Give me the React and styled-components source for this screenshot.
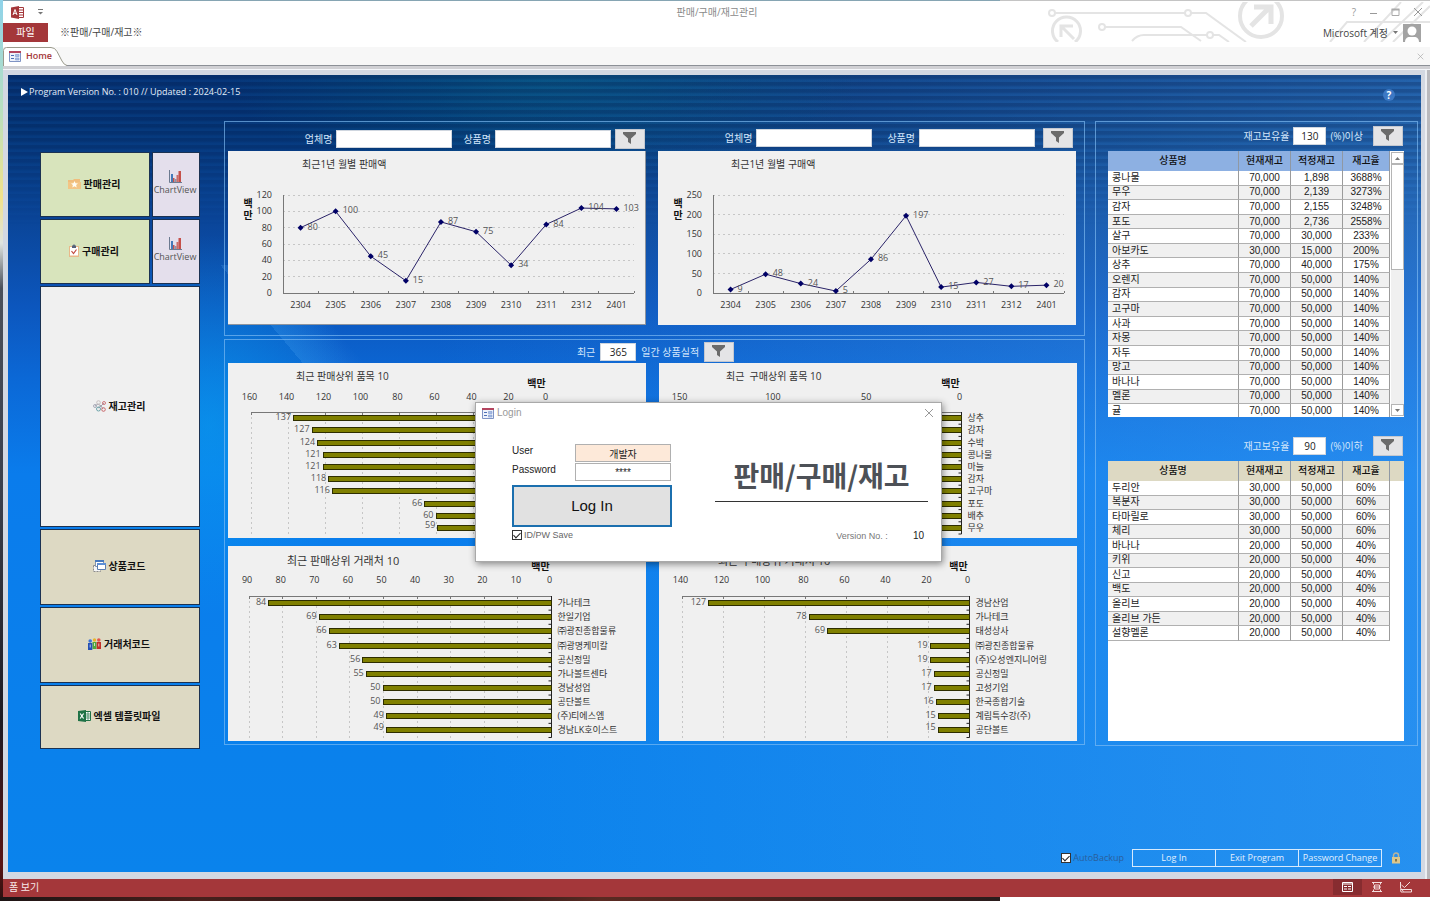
import { useState } from "react";
import styled, { createGlobalStyle } from "styled-components";

const GlobalStyle = createGlobalStyle`
    * {
        box-sizing: border-box;
    }

    body {
        margin: 0;
        font-family: "Open Sans", "Noto Sans CJK KR", sans-serif;
        font-size: 10px;
        line-height: 14px;
        color: #222;
    }

    button,
    input {
        font: inherit;
        color: inherit;
        margin: 0;
    }
`;

const Desktop = styled.div`
    min-height: 100vh;
    min-width: 1180px;
    display: flex;
    flex-direction: column;
    padding: 1px 0 4px 3px;
    background:
        linear-gradient(90deg, #1d1414, #48201c 20%, #1c1718 45%, #5a2a22 60%, #2a1c1c) left bottom / 1000px 4px no-repeat,
        linear-gradient(#8fd3ea 0, #b7dfc0 12%, #f2e28a 22%, #dfe3e0 27%, #4a4f5a 32%, #3a3f4c 55%, #1d1a22 80%, #5a1414 96%, #2a1010) left top / 3px 100% no-repeat,
        linear-gradient(90deg, #86a5b3 1000px, #c4c4c4 1000px) left top / 100% 1px no-repeat,
        #fff;
`;

const Window = styled.div`
    position: relative;
    flex: 1;
    display: flex;
    flex-direction: column;
    background: #fff;
`;

/* ---------- title bar and ribbon ---------- */

const Top = styled.header`
    position: relative;
    height: 46px;
`;

const Circuit = styled.svg`
    position: absolute;
    right: 0;
    top: 1px;
    width: 384px;
    height: 40px;
`;

const TitleBar = styled.div`
    position: relative;
    display: grid;
    grid-template-columns: 1fr auto 1fr;
    align-items: center;
    height: 22px;
    padding: 0 7px 0 8px;
    color: #8a8a8a;
`;

const TitleSide = styled.div`
    display: flex;
    align-items: center;
    gap: ${(p) => p.$gap}px;
    justify-content: ${(p) => (p.$end ? "flex-end" : "flex-start")};
`;

const IconButton = styled.button`
    display: flex;
    border: 0;
    padding: 0;
    background: none;
    color: #999;
    cursor: pointer;
`;

const Ribbon = styled.div`
    position: relative;
    display: flex;
    align-items: center;
    height: 19px;
    color: #444;
`;

const FileButton = styled.button`
    width: 45px;
    height: 19px;
    padding: 0 0 1px;
    border: 0;
    background: #a4373a;
    color: #fff;
`;

const RibbonTab = styled.button`
    border: 0;
    padding: 0 0 2px;
    margin-left: 12px;
    background: none;
`;

const Account = styled.div`
    display: flex;
    align-items: center;
    gap: 5px;
    margin-left: auto;
    padding-right: 9px;
`;

const DocTabs = styled.div`
    display: flex;
    align-items: center;
    justify-content: space-between;
    height: 19px;
    padding-right: 6px;
    background: #f7f7f7;
    border-bottom: 1px solid #8c9097;
`;

const DocTab = styled.button`
    position: relative;
    height: 19px;
    width: 62px;
    padding: 0 0 0 6px;
    border: 0;
    background: none;
    color: #a4373a;
    font-size: 9px;
    font-weight: 600;
    display: flex;
    align-items: center;
    gap: 5px;

    > svg:first-child {
        position: absolute;
        left: 0;
        top: 0;
    }

    > svg,
    > span {
        position: relative;
    }
`;

/* ---------- main form ---------- */

const Frame = styled.div`
    flex: 1;
    display: flex;
    padding: 9px 9px 7px 5px;
    background: #d3d8e2;
    box-shadow: inset 0 3px 0 #d0d0d4, inset 0 4px 0 #f4f6fa, inset -3px 0 0 #b9b9bd, inset -5px 0 0 #eceef2;
`;

const Form = styled.main`
    position: relative;
    flex: 1;
    min-width: 0;
    display: flex;
    flex-direction: column;
    background:
        radial-gradient(ellipse 150px 190px at 200px 350px, rgba(8, 160, 240, 0.6), rgba(8, 160, 240, 0)),
        linear-gradient(50deg, transparent 60%, rgba(120, 190, 255, 0.18) 60%, transparent 76%) 88px 190px / 280px 130px no-repeat,
        radial-gradient(ellipse 320px 110px at 38% 0, rgba(8, 110, 140, 0.5), rgba(8, 110, 140, 0)),
        linear-gradient(90deg, rgba(60, 150, 240, 0) 30%, rgba(80, 165, 245, 0.4)),
        linear-gradient(#07367a 0, #06397c 7%, #0a4598 18%, #0c56bd 29%, #0b68d6 38%, #0a7cec 50%, #0a83ec 100%);

    &::before {
        content: "";
        position: absolute;
        inset: 0 0 auto 0;
        height: 150px;
        background: repeating-linear-gradient(rgba(0, 10, 50, 0.2) 0 3px, rgba(0, 10, 50, 0) 5px 7px);
        mask-image: linear-gradient(#000 30%, transparent);
        pointer-events: none;
    }
`;

const FormHeader = styled.div`
    position: relative;
    display: flex;
    justify-content: space-between;
    align-items: flex-start;
    height: 46px;
    padding: 10px 26px 0 13px;
    color: #e4edf8;
    font-size: 9px;
`;

const Version = styled.div`
    display: flex;
    align-items: center;
    gap: 1px;
`;

const HelpButton = styled.button`
    width: 12px;
    height: 12px;
    margin-top: 4px;
    padding: 0;
    border: 0;
    border-radius: 50%;
    background: #3c78c4;
    color: #fff;
    font-size: 10px;
    font-weight: 700;
    line-height: 12px;
`;

const Columns = styled.div`
    position: relative;
    display: grid;
    grid-template-columns: 160px minmax(0, 1fr) 323px;
    align-items: start;
    padding: 0 3px 0 32px;
`;

const Nav = styled.nav`
    display: flex;
    flex-direction: column;
    gap: 2px;
    padding-top: 31px;
`;

const NavRow = styled.div`
    display: grid;
    grid-template-columns: 1fr 48px;
    gap: 2px;
`;

const tones = {
    green: "#d8e4bc",
    lilac: "#e4dfec",
    plain: "#f0f0f0",
    sand: "#ddd9c3",
};

const NavButton = styled.button`
    display: flex;
    flex-direction: ${(p) => (p.$stacked ? "column" : "row")};
    align-items: center;
    justify-content: center;
    gap: ${(p) => (p.$stacked ? 0 : 3)}px;
    height: ${(p) => p.$height}px;
    padding: 0 2px 2px 0;
    border: 1px solid #1b3252;
    background: ${(p) => tones[p.$tone]};
    color: ${(p) => (p.$stacked ? "#555" : "#111")};
    font-size: ${(p) => (p.$stacked ? 9 : 10)}px;
    font-weight: ${(p) => (p.$stacked ? 400 : 700)};
    cursor: pointer;
`;

const Middle = styled.div`
    display: flex;
    flex-direction: column;
    gap: 3px;
    margin: 0 10px 0 24px;
`;

const Group = styled.section`
    border: 1px solid rgba(130, 190, 245, 0.65);
    padding: ${(p) => p.$padding};
`;

const ChartGrid = styled.div`
    display: grid;
    grid-template-columns: 1fr 1fr;
    gap: 8px ${(p) => p.$gap}px;
`;

const FilterRow = styled.form`
    display: flex;
    align-items: center;
    justify-content: ${(p) => p.$justify || "flex-end"};
    gap: ${(p) => p.$gap}px;
    height: ${(p) => p.$height}px;
    padding: ${(p) => p.$padding || 0};
    color: #d3e6fb;
`;

const Field = styled.div`
    display: flex;
    align-items: center;
    gap: 4px;
    padding-left: 7px;
`;

const TextInput = styled.input`
    width: ${(p) => p.$width}px;
    height: 18px;
    padding: 0 2px;
    border: 1px solid #cfd6df;
    background: #fff;
    color: #222;
    text-align: ${(p) => (p.$center ? "center" : "left")};
`;

const FunnelButton = styled.button`
    display: flex;
    align-items: center;
    justify-content: center;
    width: 30px;
    height: 20px;
    padding: 0 2px 2px 0;
    border: 1px solid #c4c8d0;
    background: #e4e4e6;
`;

const ChartPanel = styled.figure`
    margin: 0;
    background: #f0f0f0;
    overflow: hidden;
    box-shadow: ${(p) => (p.$edge ? "inset 0 -1px 0 #8d949e, inset -1px 0 0 #8d949e" : "none")};

    svg {
        display: block;
        width: 100%;
        height: auto;
    }

    text {
        font-size: 9px;
        fill: #333;
        white-space: pre;
    }

    .title {
        font-size: ${(p) => p.$title || 10}px;
    }

    .unit {
        font-size: 10px;
        font-weight: 700;
        fill: #111;
    }

    .value {
        fill: #555;
    }

    .grid {
        stroke: #c6c6c6;
        stroke-dasharray: 2 3;
        shape-rendering: crispEdges;
    }

    .axis {
        stroke: #777;
        fill: none;
        shape-rendering: crispEdges;
    }
`;

/* ---------- stock tables ---------- */

const StockSection = styled.div`
    & + & {
        margin-top: 15px;
    }
`;

const TableFrame = styled.div`
    display: flex;
    height: ${(p) => p.$height}px;
    margin: 0 13px 0 12px;
    overflow: hidden;
    background: #fff;
`;

const StockTable = styled.table`
    flex: 1;
    height: ${(p) => p.$height}px;
    border-spacing: 0;
    table-layout: fixed;
    line-height: 12px;

    th {
        height: ${(p) => p.$head}px;
        padding: 0 0 2px;
        background: ${(p) => p.$tint};
        border-right: 1px solid #8f98a4;
        font-weight: 500;
        color: #111;
    }

    td {
        padding: 0;
        border-right: 1px solid #9b9b9b;
        border-bottom: 1px solid #b0b0b0;
        font-family: "Liberation Sans", "Noto Sans CJK KR", sans-serif;
        text-align: center;
        overflow: hidden;
    }

    td:first-child {
        padding-left: 4px;
        text-align: left;
    }

    tr:nth-child(even) td {
        background: #f0f0f0;
    }
`;

const TableSide = styled.div`
    width: 14px;
    height: ${(p) => p.$head}px;
    background: ${(p) => p.$tint};
`;

const ScrollBar = styled.div`
    display: flex;
    flex-direction: column;
    width: 13px;
    margin: 1px 0 1px 1px;
    background: #f0f0f0;
`;

const ScrollArrow = styled.button`
    display: flex;
    align-items: center;
    justify-content: center;
    height: 12px;
    padding: 0;
    border: 1px solid #b5b5b5;
    background: #fff;
`;

const ScrollThumb = styled.div`
    height: 106px;
    border: 1px solid #b5b5b5;
    background: #fff;
    margin-bottom: auto;
`;

/* ---------- form footer and status bar ---------- */

const FormFooter = styled.div`
    display: flex;
    align-items: center;
    justify-content: flex-end;
    margin-top: auto;
    padding: 8px 20px 5px;
    color: #e2effd;
    font-size: 9px;
`;

const CheckLabel = styled.label`
    display: flex;
    align-items: center;
    gap: 2px;
    color: ${(p) => p.$color};
    font-size: 9px;
`;

const CheckBox = styled.input`
    appearance: none;
    position: relative;
    width: 10px;
    height: 10px;
    border: 1px solid #333;
    background: #fff;

    &:checked::after {
        content: "";
        position: absolute;
        left: 2px;
        top: 0;
        width: 3px;
        height: 6px;
        border: solid #222;
        border-width: 0 1px 1px 0;
        transform: rotate(45deg);
    }
`;

const FootButtons = styled.div`
    display: flex;
    margin: 0 9px 0 8px;
`;

const FootButton = styled.button`
    width: 84px;
    height: 18px;
    padding: 0;
    border: 1px solid #d6eafd;
    background: transparent;
    white-space: nowrap;

    & + & {
        margin-left: -1px;
    }
`;

const StatusBar = styled.footer`
    display: flex;
    align-items: center;
    justify-content: space-between;
    height: 18px;
    padding: 0 10px 2px 6px;
    background: #a4373a;
    color: #f7e9e9;
`;

const Views = styled.div`
    display: flex;
`;

const ViewButton = styled.button`
    display: flex;
    align-items: center;
    justify-content: center;
    width: 29px;
    height: 16px;
    padding: 0;
    border: 0;
    background: ${(p) => (p.$active ? "#872c30" : "transparent")};
`;

/* ---------- login window ---------- */

const Dialog = styled.div`
    position: absolute;
    left: 472px;
    top: 401px;
    width: 467px;
    height: 160px;
    border: 1px solid #a9a9a9;
    background: #fff;
    box-shadow: 1px 2px 7px rgba(0, 0, 0, 0.45);
    font-family: "Liberation Sans", "Noto Sans CJK KR", sans-serif;
`;

const DialogBar = styled.div`
    display: flex;
    align-items: center;
    gap: 3px;
    height: 20px;
    padding: 0 7px 0 6px;
    color: #999;

    button {
        margin-left: auto;
    }
`;

const DialogBody = styled.form`
    display: grid;
    grid-template-columns: 160px 213px;
    gap: 43px;
    padding: 21px 0 0 36px;
`;

const LoginFields = styled.div`
    display: grid;
    grid-template-columns: 62px 96px;
    row-gap: 1px;
    column-gap: 1px;

    label {
        color: #222;
    }
`;

const LoginInput = styled.input`
    height: 18px;
    width: 96px;
    padding: 0;
    border: 1px solid #b0b0b0;
    background: ${(p) => p.$fill};
    text-align: center;
`;

const LoginButton = styled.button`
    width: 160px;
    height: 42px;
    margin: 4px 0 1px;
    border: 2px solid #1b6fae;
    background: #e1e1e1;
    color: #111;
    font-size: 15px;
`;

const Brand = styled.div`
    text-align: center;

    h1 {
        margin: 0;
        padding: 8px 0 0;
        height: 58px;
        border-bottom: 1px solid #333;
        color: #4d5157;
        font-family: "Noto Sans CJK KR", sans-serif;
        font-size: 28px;
        font-weight: 700;
        line-height: 46px;
        white-space: nowrap;
    }

    p {
        display: flex;
        justify-content: flex-end;
        gap: 25px;
        margin: 27px 4px 0 0;
        font-size: 9px;
        color: #777;
    }

    b {
        font-weight: 400;
        font-size: 10px;
        color: #222;
    }
`;

/* ---------- icons ---------- */

const AccessIcon = () => (
    <svg width="13" height="13" viewBox="0 0 13 13">
        <path d="M7 1.500h5.500v10H7z" fill="#fff" stroke="#a4373a" />
        <path d="M8 4h4M8 6.500h4M8 9h4" stroke="#a4373a" />
        <path d="M0 1.500 8 0v13L0 11.500z" fill="#a4373a" />
        <path d="M2 9 4 3.500 6 9M2.800 7.300h2.400" stroke="#fff" fill="none" />
    </svg>
);

const FormIcon = () => (
    <svg width="12" height="11" viewBox="0 0 12 11">
        <path d="M.5.5h11v10H.5z" fill="#eef2fb" stroke="#7f93c4" />
        <path d="M0 0h12v2H0z" fill="#b3455f" />
        <path d="M2 4.500h3M2 7.500h3" stroke="#4d6fb5" />
        <path d="M6.500 3.500h3.500v2h-3.500zM6.500 7h3.500v2h-3.500z" fill="#a9bde4" stroke="#7f9ad0" strokeWidth=".6" />
    </svg>
);

const Cross = ({ size = 10, color = "#999" }) => (
    <svg width={size} height={size} viewBox="0 0 10 10">
        <path d="M1 1l8 8M9 1l-8 8" stroke={color} fill="none" />
    </svg>
);

const Funnel = () => (
    <svg width="13" height="12" viewBox="0 0 13 12">
        <path d="M0 0h13v2L8 6.500V12L5 10V6.500L0 2z" fill="#6b6b6b" />
    </svg>
);

const FolderStar = () => (
    <svg width="13" height="12" viewBox="0 0 13 12">
        <path d="M0 2h5l1-1h6v10H0z" fill="#f0bd7c" />
        <path d="M0 4h13v7H0z" fill="#f3c585" />
        <path d="M6.500 3l1 2.300 2.500.2-1.900 1.600.6 2.500-2.200-1.300-2.200 1.300.6-2.500L3 5.500l2.500-.2z" fill="#fffdf4" />
    </svg>
);

const Clipboard = () => (
    <svg width="10" height="13" viewBox="0 0 10 13">
        <path d="M0 2h10v11H0z" fill="#e9b98a" />
        <path d="M1 3h8v8.500H1z" fill="#fff" />
        <path d="M3 1.500h1l1-1.500 1 1.500h1V4H3z" fill="#56617a" />
        <path d="M2.500 7l2 2.500 3-4" stroke="#c1473c" fill="none" strokeWidth="1.200" />
    </svg>
);

const BarsIcon = () => (
    <svg width="13" height="13" viewBox="0 0 13 13">
        <path d="M.5 0v12.500H13" stroke="#6c7a90" fill="none" />
        <path d="M2 4h2v8H2z" fill="#4479b8" />
        <path d="M4 8h1.500v4H4zM9.500 1h2.500v11H9.500z" fill="#c5504a" />
        <path d="M5.500 9h2v3h-2z" fill="#8d93a8" />
        <path d="M7.500 5h2v7h-2z" fill="#c5504a" fillOpacity=".8" />
    </svg>
);

const Molecule = () => (
    <svg width="13" height="12" viewBox="0 0 13 12" fill="none">
        <path d="M2 6l3-2 3 2 3-3M5 8l3-2 2 3" stroke="#8a8a9a" strokeWidth=".8" />
        <circle cx="2" cy="6" r="1.500" stroke="#a9abb8" />
        <circle cx="5.500" cy="2.500" r="1.800" stroke="#c8c0c0" />
        <circle cx="11" cy="3" r="1.500" stroke="#d07a7e" />
        <circle cx="5.500" cy="9" r="2" stroke="#6fa5ab" />
        <circle cx="10.500" cy="9.500" r="1.800" stroke="#c9686c" />
    </svg>
);

const WindowsIcon = () => (
    <svg width="13" height="12" viewBox="0 0 13 12">
        <path d="M.5 5.500h7v6h-7z" fill="#f6f6f6" stroke="#8a8a8a" strokeDasharray="2 1" />
        <path d="M2.500.5h8v6h-8z" fill="#fff" stroke="#8394ad" />
        <path d="M2 0h9v2H2z" fill="#4678bd" />
        <path d="M4.500 3.500h8v6h-8z" fill="#fff" stroke="#5a7db0" />
        <path d="M4 3h9v2H4z" fill="#5c8fd6" />
    </svg>
);

const People = () => (
    <svg width="13" height="12" viewBox="0 0 13 12">
        <circle cx="6.500" cy="2" r="1.700" fill="#e8b52c" />
        <path d="M4.500 4h4v7h-4z" fill="#4fa83d" />
        <circle cx="2.200" cy="3" r="1.800" fill="#3c73d8" />
        <path d="M0 5h4.300v7H0z" fill="#2450b4" />
        <circle cx="10.800" cy="2" r="1.800" fill="#e2574c" />
        <path d="M8.700 4H13v7H8.700z" fill="#c22f28" />
        <path d="M2.200 6.500v3M6.500 5v3M10.800 5.500v3" stroke="#fff" strokeOpacity=".7" />
    </svg>
);

const ExcelIcon = () => (
    <svg width="13" height="12" viewBox="0 0 13 12">
        <path d="M7 1.500h5.500v9H7z" fill="#fff" stroke="#1f7246" />
        <path d="M8 4h4M8 6h4M8 8h4M10 2v8" stroke="#1f7246" strokeWidth=".7" />
        <path d="M0 1l8-1v12l-8-1z" fill="#1f7246" />
        <path d="M2.200 3.500l3.400 5M5.600 3.500l-3.400 5" stroke="#fff" strokeWidth="1.200" />
    </svg>
);

const LockIcon = () => (
    <svg width="10" height="12" viewBox="0 0 10 12">
        <path d="M2.500 6V3.500a2.500 2.500 0 0 1 5 0V6" fill="none" stroke="#b9b49c" strokeWidth="1.500" />
        <path d="M1 5h8v6.500H1z" fill="#dcc78c" />
        <path d="M5 7v2.500" stroke="#6b5a2a" strokeWidth="1.500" />
    </svg>
);

const Triangle = ({ up }) => (
    <svg width="5" height="3" viewBox="0 0 5 3">
        <path d={up ? "M0 3 2.500 0 5 3z" : "M0 0h5L2.500 3z"} fill="#777" />
    </svg>
);

const CircuitArt = () => (
    <Circuit viewBox="0 0 384 40" fill="none" stroke="#e4e4e4" strokeWidth="2" aria-hidden="true">
        <circle cx="6" cy="11" r="3" />
        <path d="M9 11h130M145 11h15l40 29" />
        <circle cx="142" cy="11" r="3" />
        <circle cx="56" cy="25" r="3" />
        <path d="M59 25h76l20 14M86 39q5-6 12-6h63M167 33h6l10 7" />
        <circle cx="164" cy="33" r="3" />
        <path d="M12 40a14 14 0 1 1 17 0" strokeWidth="3" />
        <path d="M28 37 16 25M15 35V24h12" strokeWidth="3" />
        <circle cx="215" cy="14" r="21" strokeWidth="4" />
        <path d="M205 24l17-17M208 5h17v17" strokeWidth="5" />
        <path d="M284 40l17-20h83M335 40l42-40M347 40l37-36M318 40l37-40" />
    </Circuit>
);

/* ---------- charts ---------- */

const PLOT = { left: 55, right: 406, top: 44, bottom: 142 };

function LineChart({ title, titleX, max, step, data, edge }) {
    const slot = (PLOT.right - PLOT.left) / data.length;
    const yOf = (v) => PLOT.bottom - (v / max) * (PLOT.bottom - PLOT.top);
    const points = data.map(([label, value], i) => ({
        label,
        value,
        x: PLOT.left + slot * (i + 0.5),
        y: yOf(value),
    }));
    const ticks = [];
    for (let v = 0; v <= max; v += step) ticks.push(v);

    return (
        <ChartPanel $edge={edge}>
            <svg viewBox="0 0 418 174" role="img" aria-label={title}>
                <text className="title" x={titleX} y="13" dy=".35em">{title}</text>
                <text className="unit" x="20" y="52" dy=".35em" textAnchor="middle">백</text>
                <text className="unit" x="20" y="64" dy=".35em" textAnchor="middle">만</text>
                {ticks.map((v) => (
                    <g key={v}>
                        {v > 0 && <line className="grid" x1={PLOT.left} x2={PLOT.right} y1={yOf(v)} y2={yOf(v)} />}
                        <text x="44" y={yOf(v)} dy=".35em" textAnchor="end">{v}</text>
                    </g>
                ))}
                <path className="axis" d={`M${PLOT.left} ${PLOT.top}V${PLOT.bottom}H${PLOT.right}`} />
                {points.map((p) => (
                    <line key={p.label} className="axis" x1={p.x + slot / 2} x2={p.x + slot / 2} y1={PLOT.bottom - 2} y2={PLOT.bottom} />
                ))}
                <polyline points={points.map((p) => `${p.x},${p.y}`).join(" ")} fill="none" stroke="#2a2368" />
                {points.map((p) => (
                    <g key={p.label}>
                        <path d={`M${p.x - 3} ${p.y}l3-3 3 3-3 3z`} fill="#000066" />
                        <text className="value" x={p.x + 7} y={p.y - 1} dy=".35em">{p.value}</text>
                        <text x={p.x} y="154" dy=".35em" textAnchor="middle">{p.label}</text>
                    </g>
                ))}
            </svg>
        </ChartPanel>
    );
}

function BarChart({ title, titleX, tall, max, step, zero, unit, data }) {
    const height = tall ? 195 : 175;
    const axisY = tall ? 50 : 49;
    const row = tall ? 14.15 : 12.2;
    const bottom = axisY + row * data.length;
    const ticks = [];
    for (let v = 0; v <= max; v += step) ticks.push(v);

    return (
        <ChartPanel $title={tall ? 11 : 10}>
            <svg viewBox={`0 0 418 ${height}`} role="img" aria-label={title}>
                <text className="title" x={titleX} y={tall ? 15 : 13} dy=".35em">{title}</text>
                <text className="unit" x={zero - 11} y="20" dy=".35em" textAnchor="middle">백만</text>
                {ticks.map((v) => (
                    <g key={v}>
                        <line className="grid" x1={zero - v * unit} x2={zero - v * unit} y1={axisY} y2={bottom} />
                        <line className="axis" x1={zero - v * unit} x2={zero - v * unit} y1={axisY} y2={axisY + 3} />
                        <text x={zero - v * unit - 2} y="34" dy=".35em" textAnchor="middle">{v}</text>
                    </g>
                ))}
                <path className="axis" d={`M${zero - max * unit} ${axisY}H${zero}`} />
                <path d={`M${zero} ${axisY}V${bottom}`} stroke="#222" />
                {data.map(([name, value], i) => {
                    const y = Math.round(axisY + row * (i + 0.5));
                    const x = zero - value * unit;
                    const last = i === data.length - 1;
                    return (
                        <g key={i}>
                            <path d={`M${zero - 3} ${axisY + row * (i + 1)}h3`} stroke="#222" />
                            <rect x={Math.round(x) - 0.5} y={y - 2.5} width={zero - Math.round(x) + 0.5} height="5" fill="#808000" stroke="#2e2e00" />
                            <text className="value" x={x - 3} y={last ? y - 3 : y - 1} dy=".35em" textAnchor="end">{value}</text>
                            <text x={zero + 6} y={y} dy=".35em">{name}</text>
                        </g>
                    );
                })}
            </svg>
        </ChartPanel>
    );
}

/* ---------- data ---------- */

const months = ["2304", "2305", "2306", "2307", "2308", "2309", "2310", "2311", "2312", "2401"];
const zip = (names, values) => names.map((n, i) => [n, values[i]]);

const sales = zip(months, [80, 100, 45, 15, 87, 75, 34, 84, 104, 103]);
const purchases = zip(months, [9, 48, 24, 5, 86, 197, 15, 27, 17, 20]);

const items = ["상추", "감자", "수박", "콩나물", "마늘", "감자", "고구마", "포도", "배추", "무우"];
const topSalesItems = zip(items, [137, 127, 124, 121, 121, 118, 116, 66, 60, 59]);
const topPurchaseItems = zip(items, [146, 145, 143, 142, 140, 139, 137, 62, 54, 38]);

const topSalesClients = zip(
    ["가나테크", "한일기업", "㈜광진종합물류", "㈜광명케미칼", "공신정밀", "가나볼트센타", "경남성업", "공단볼트", "(주)티에스엠", "경남LK호이스트"],
    [84, 69, 66, 63, 56, 55, 50, 50, 49, 49]
);
const topPurchaseClients = zip(
    ["경남산업", "가나테크", "태성상사", "㈜광진종합물류", "(주)오성엔지니어링", "공신정밀", "고성기업", "한국종합기술", "계림특수강(주)", "공단볼트"],
    [127, 78, 69, 19, 19, 17, 17, 16, 15, 15]
);

const overStock = [
    ["콩나물", "70,000", "1,898", "3688%"],
    ["무우", "70,000", "2,139", "3273%"],
    ["감자", "70,000", "2,155", "3248%"],
    ["포도", "70,000", "2,736", "2558%"],
    ["살구", "70,000", "30,000", "233%"],
    ["아보카도", "30,000", "15,000", "200%"],
    ["상추", "70,000", "40,000", "175%"],
    ...["오렌지", "감자", "고구마", "사과", "자몽", "자두", "망고", "바나나", "멜론", "귤"].map((n) => [n, "70,000", "50,000", "140%"]),
];

const underStock = [
    ...["두리안", "복분자", "타마릴로", "체리"].map((n) => [n, "30,000", "50,000", "60%"]),
    ...["바나나", "키위", "신고", "백도", "올리브", "올리브 가든", "설향멜론"].map((n) => [n, "20,000", "50,000", "40%"]),
];

/* ---------- pieces ---------- */

function NameFilter({ id, gap, padding }) {
    return (
        <FilterRow $gap={gap} $height={29} $padding={padding}>
            <Field>
                <label htmlFor={`${id}-company`}>업체명</label>
                <TextInput id={`${id}-company`} $width={116} />
            </Field>
            <Field>
                <label htmlFor={`${id}-item`}>상품명</label>
                <TextInput id={`${id}-item`} $width={116} />
            </Field>
            <FunnelButton type="button" aria-label="filter"><Funnel /></FunnelButton>
        </FilterRow>
    );
}

function RateFilter({ id, value, suffix }) {
    return (
        <FilterRow $gap={10} $height={29} $padding="0 14px 1px 0">
            <Field>
                <label htmlFor={id}>재고보유율</label>
                <TextInput id={id} $width={33} $center defaultValue={value} />
                <span>{suffix}</span>
            </Field>
            <FunnelButton type="button" aria-label="filter"><Funnel /></FunnelButton>
        </FilterRow>
    );
}

function Stock({ rows, tint, head, height }) {
    return (
        <StockTable $tint={tint} $head={head} $height={height}>
            <colgroup>
                <col />
                <col width="52" />
                <col width="52" />
                <col width="47" />
            </colgroup>
            <thead>
                <tr>
                    <th>상품명</th>
                    <th>현재재고</th>
                    <th>적정재고</th>
                    <th>재고율</th>
                </tr>
            </thead>
            <tbody>
                {rows.map((row, i) => (
                    <tr key={i}>
                        {row.map((cell, j) => (
                            <td key={j}>{cell}</td>
                        ))}
                    </tr>
                ))}
            </tbody>
        </StockTable>
    );
}

function Login({ onClose }) {
    return (
        <Dialog role="dialog" aria-label="Login">
            <DialogBar>
                <FormIcon />
                <span>Login</span>
                <IconButton aria-label="close" onClick={onClose}><Cross /></IconButton>
            </DialogBar>
            <DialogBody onSubmit={(e) => e.preventDefault()}>
                <div>
                    <LoginFields>
                        <label htmlFor="user">User</label>
                        <LoginInput id="user" $fill="#fde9d9" defaultValue="개발자" />
                        <label htmlFor="password">Password</label>
                        <LoginInput id="password" $fill="#fff" defaultValue="****" />
                    </LoginFields>
                    <LoginButton>Log In</LoginButton>
                    <CheckLabel $color="#666">
                        <CheckBox type="checkbox" defaultChecked />
                        ID/PW Save
                    </CheckLabel>
                </div>
                <Brand>
                    <h1>판매/구매/재고</h1>
                    <p>
                        <span>Version No. :</span>
                        <b>10</b>
                    </p>
                </Brand>
            </DialogBody>
        </Dialog>
    );
}

export default function App() {
    const [login, showLogin] = useState(true);

    return (
        <Desktop>
            <GlobalStyle />
            <Window>
                <Top>
                    <CircuitArt />
                    <TitleBar>
                        <TitleSide $gap={14}>
                            <AccessIcon />
                            <IconButton aria-label="customize">
                                <svg width="5" height="6" viewBox="0 0 5 6">
                                    <path d="M0 .5h5" stroke="#777" />
                                    <path d="M0 3h5L2.500 5.500z" fill="#777" />
                                </svg>
                            </IconButton>
                        </TitleSide>
                        <span>판매/구매/재고관리</span>
                        <TitleSide $gap={13} $end>
                            <IconButton aria-label="help">?</IconButton>
                            <IconButton aria-label="minimize">
                                <svg width="9" height="9" viewBox="0 0 9 9"><path d="M1 5.500h7" stroke="#999" /></svg>
                            </IconButton>
                            <IconButton aria-label="maximize">
                                <svg width="9" height="9" viewBox="0 0 9 9">
                                    <path d="M1 1.500h7v6H1z" fill="none" stroke="#aaa" />
                                    <path d="M.5 1.500h8" stroke="#aaa" strokeWidth="2" />
                                </svg>
                            </IconButton>
                            <IconButton aria-label="close"><Cross /></IconButton>
                        </TitleSide>
                    </TitleBar>
                    <Ribbon>
                        <FileButton>파일</FileButton>
                        <RibbonTab>※판매/구매/재고※</RibbonTab>
                        <Account>
                            <span>Microsoft 계정</span>
                            <Triangle />
                            <svg width="18" height="18" viewBox="0 0 18 18">
                                <path d="M0 0h18v18H0z" fill="#a3a3a3" />
                                <circle cx="9" cy="7" r="4.500" fill="#fff" />
                                <path d="M2 18c0-4 3-5 4-5h6c1 0 4 1 4 5z" fill="#fff" />
                            </svg>
                        </Account>
                    </Ribbon>
                </Top>

                <DocTabs>
                    <DocTab>
                        <svg width="64" height="19" viewBox="0 0 64 19">
                            <path d="M.5 19V3.500q0-3 3-3H48q4 0 6 4l5 9.500q2 4 5 5z" fill="#fff" />
                            <path d="M.5 19V3.500q0-3 3-3H48q4 0 6 4l5 9.500q2 4 5 4.500" fill="none" stroke="#9a9a8c" />
                        </svg>
                        <FormIcon />
                        <span>Home</span>
                    </DocTab>
                    <IconButton aria-label="close tab"><Cross size={7} color="#aaa" /></IconButton>
                </DocTabs>

                <Frame>
                    <Form>
                        <FormHeader>
                            <Version>
                                <svg width="7" height="8" viewBox="0 0 7 8"><path d="M0 0l7 4-7 4z" fill="#fff" /></svg>
                                Program Version No. : 010 // Updated : 2024-02-15
                            </Version>
                            <HelpButton>?</HelpButton>
                        </FormHeader>

                        <Columns>
                            <Nav>
                                <NavRow>
                                    <NavButton $tone="green" $height={65}><FolderStar />판매관리</NavButton>
                                    <NavButton $tone="lilac" $height={65} $stacked><BarsIcon />ChartView</NavButton>
                                </NavRow>
                                <NavRow>
                                    <NavButton $tone="green" $height={65}><Clipboard />구매관리</NavButton>
                                    <NavButton $tone="lilac" $height={65} $stacked><BarsIcon />ChartView</NavButton>
                                </NavRow>
                                <NavButton $tone="plain" $height={241}><Molecule />재고관리</NavButton>
                                <NavButton $tone="sand" $height={76}><WindowsIcon />상품코드</NavButton>
                                <NavButton $tone="sand" $height={76}><People />거래처코드</NavButton>
                                <NavButton $tone="sand" $height={64}><ExcelIcon />엑셀 템플릿파일</NavButton>
                            </Nav>

                            <Middle>
                                <Group $padding="0 8px 10px 3px">
                                    <ChartGrid $gap={12}>
                                        <div>
                                            <NameFilter id="sales" gap={4} padding="4px 1px 0 0" />
                                            <LineChart title="최근1년 월별 판매액" titleX={74} max={120} step={20} data={sales} edge />
                                        </div>
                                        <div>
                                            <NameFilter id="purchase" gap={8} padding="3px 3px 0 0" />
                                            <LineChart title="최근1년 월별 구매액" titleX={73} max={250} step={50} data={purchases} />
                                        </div>
                                    </ChartGrid>
                                </Group>
                                <Group $padding="0 7px 3px 3px">
                                    <FilterRow $gap={5} $height={23} $justify="center" $padding="0 0 0 6px">
                                        <label htmlFor="days">최근</label>
                                        <TextInput id="days" $width={36} $center defaultValue="365" />
                                        <span>일간 상품실적</span>
                                        <FunnelButton type="button" aria-label="filter"><Funnel /></FunnelButton>
                                    </FilterRow>
                                    <ChartGrid $gap={13}>
                                        <BarChart title="최근 판매상위 품목 10" titleX={68} max={160} step={20} zero={319.5} unit={1.85} data={topSalesItems} />
                                        <BarChart title="최근  구매상위 품목 10" titleX={67} max={150} step={50} zero={302.5} unit={1.866} data={topPurchaseItems} />
                                        <BarChart tall title="최근 판매상위 거래처 10" titleX={59} max={90} step={10} zero={323.5} unit={3.36} data={topSalesClients} />
                                        <BarChart tall title="최근 구매상위 거래처 10" titleX={59} max={140} step={20} zero={310.5} unit={2.05} data={topPurchaseClients} />
                                    </ChartGrid>
                                </Group>
                            </Middle>

                            <Group $padding="0 0 4px">
                                <StockSection>
                                    <RateFilter id="over" value="130" suffix="(%)이상" />
                                    <TableFrame $height={266}>
                                        <Stock rows={overStock} tint="#8db0e2" head={20} height={268} />
                                        <ScrollBar>
                                            <ScrollArrow aria-label="scroll up"><Triangle up /></ScrollArrow>
                                            <ScrollThumb />
                                            <ScrollArrow aria-label="scroll down"><Triangle /></ScrollArrow>
                                        </ScrollBar>
                                    </TableFrame>
                                </StockSection>
                                <StockSection>
                                    <RateFilter id="under" value="90" suffix="(%)이하" />
                                    <TableFrame $height={280}>
                                        <Stock rows={underStock} tint="#ddd9c3" head={20} height={180} />
                                        <TableSide $tint="#ddd9c3" $head={20} />
                                    </TableFrame>
                                </StockSection>
                            </Group>
                        </Columns>

                        <FormFooter>
                            <CheckLabel $color="#2a5f9c">
                                <CheckBox type="checkbox" defaultChecked />
                                AutoBackup
                            </CheckLabel>
                            <FootButtons>
                                <FootButton onClick={() => showLogin(true)}>Log In</FootButton>
                                <FootButton>Exit Program</FootButton>
                                <FootButton>Password Change</FootButton>
                            </FootButtons>
                            <LockIcon />
                        </FormFooter>
                    </Form>
                </Frame>

                <StatusBar>
                    <span>폼 보기</span>
                    <Views>
                        <ViewButton $active aria-label="form view">
                            <svg width="11" height="10" viewBox="0 0 11 10" fill="none" stroke="#fff">
                                <path d="M.5.500h10v9H.5zM.5 2h10M2 4.500h3M2 7h3M6 4.500h3M6 7h3" />
                            </svg>
                        </ViewButton>
                        <ViewButton aria-label="layout view">
                            <svg width="10" height="10" viewBox="0 0 10 10" fill="none" stroke="#f3dede">
                                <path d="M0 .5h10M0 9.500h10M1.500 .5v2M8.500 .5v2M1.500 7.500v2M8.500 7.500v2M2.500 3h5v4h-5zM1 5h8" />
                            </svg>
                        </ViewButton>
                        <ViewButton aria-label="design view">
                            <svg width="12" height="11" viewBox="0 0 12 11" fill="none" stroke="#f3dede">
                                <path d="M.5 0v6l3 3.500M.5 7.500h11v2.500H1zM1.500 3l3 2.500L10 0" />
                            </svg>
                        </ViewButton>
                    </Views>
                </StatusBar>

                {login ? <Login onClose={() => showLogin(false)} /> : null}
            </Window>
        </Desktop>
    );
}
